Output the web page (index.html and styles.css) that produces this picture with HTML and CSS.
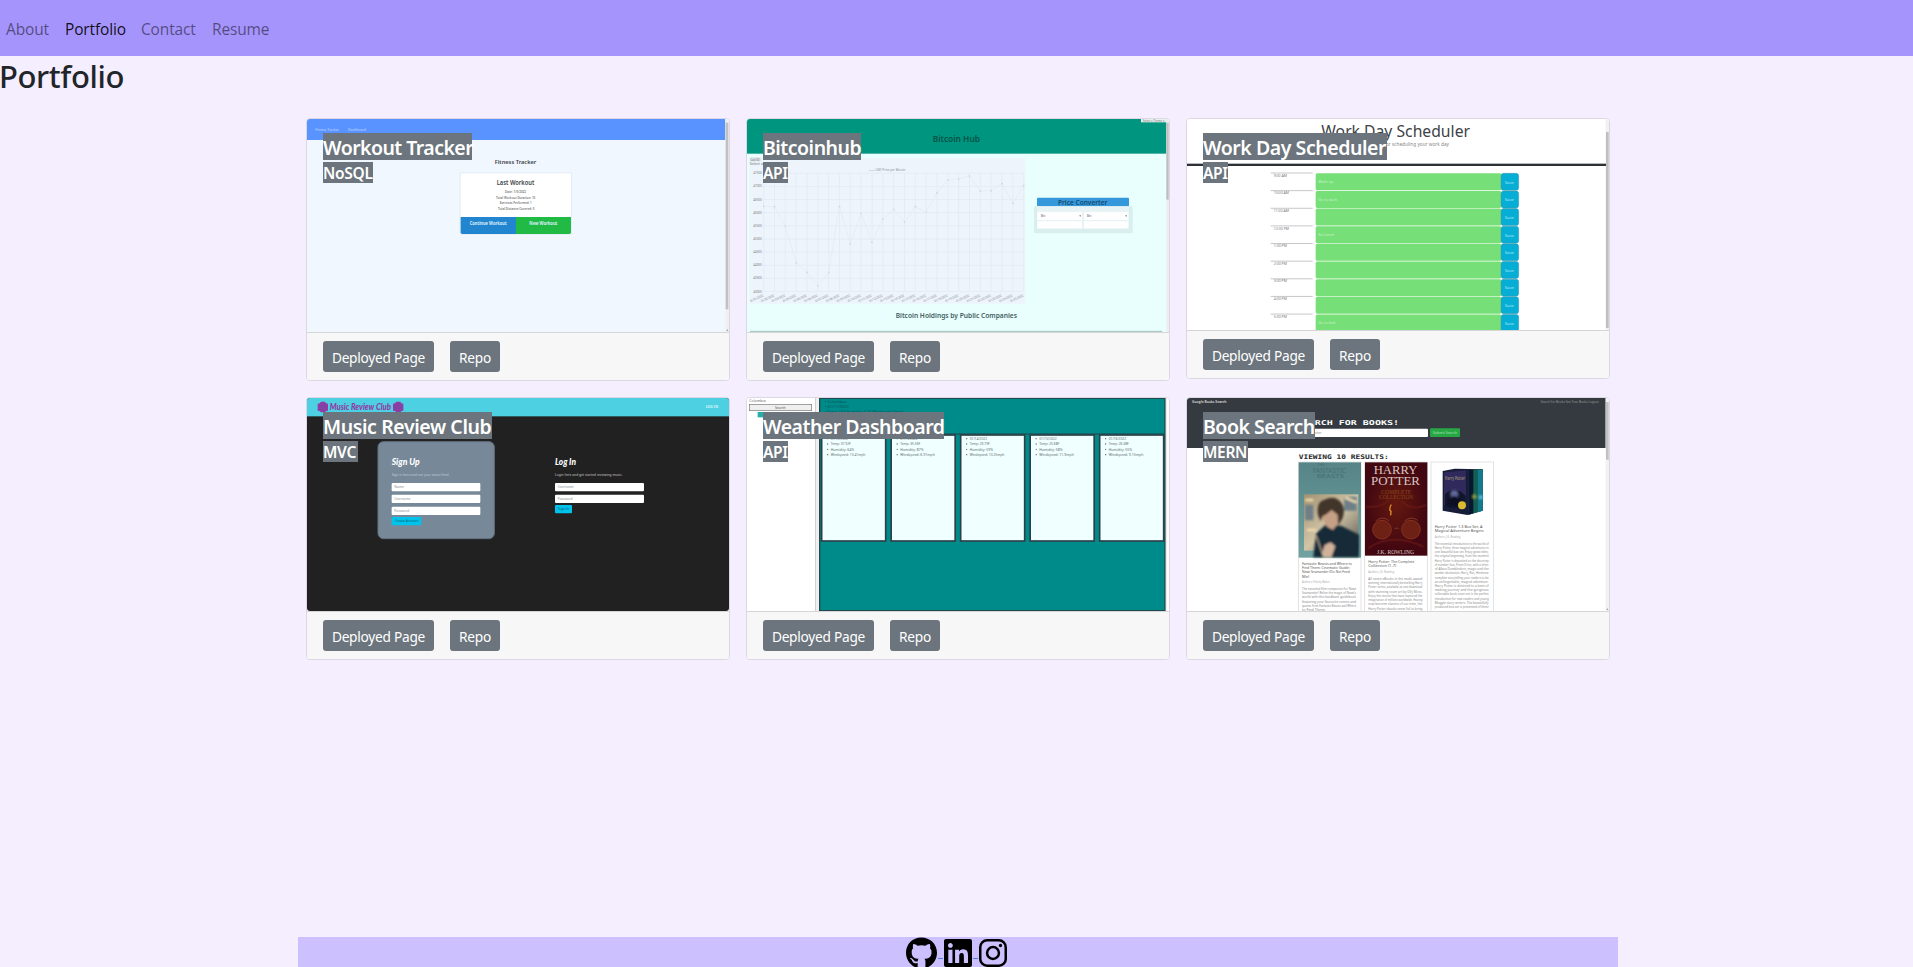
FILE: index.html
```html
<!DOCTYPE html>
<html lang="en">
<head>
<meta charset="utf-8">
<title>Portfolio</title>
<link rel="stylesheet" href="styles.css">
</head>
<body>
<nav class="navbar">
  <a class="nav-link about">About</a>
  <a class="nav-link active">Portfolio</a>
  <a class="nav-link contact">Contact</a>
  <a class="nav-link resume">Resume</a>
</nav>
<main>
  <h1 class="page-title">Portfolio</h1>
  <div class="cards">

    <article class="card">
      <svg class="shot" viewBox="21 27 1266 639" preserveAspectRatio="none">
        <rect x="21" y="27" width="1266" height="639" fill="#f0f7ff"/>
        <rect x="21" y="27" width="1255" height="63" fill="#5893ff"/>
        <rect x="1276" y="27" width="11" height="639" fill="#f0f0f2"/>
        <rect x="1277" y="38" width="8" height="560" fill="#c1c1c3"/>
        <path d="M1279 662l3-4 3 4z" fill="#888"/>
        <g fill="#c5dbff" font-size="13"><text x="46" y="63" textLength="71">Fitness Tracker</text><text x="144" y="63" textLength="54">Dashboard</text></g>
        <rect x="479" y="187" width="337" height="187" rx="6" fill="#e3ebf4"/>
        <rect x="482" y="190" width="331" height="132" rx="4" fill="#fff"/>
        <path d="M482 321h166v51H487q-5 0-5-5z" fill="#2285d0"/>
        <path d="M648 321h165v46q0 5-5 5H648z" fill="#21ba45"/>
        <g font-weight="600" fill="#3c4148">
          <text x="584" y="161" font-size="18" textLength="125">Fitness Tracker</text>
          <text x="590" y="225" font-size="20" textLength="113">Last Workout</text>
        </g>
        <g font-size="11" font-weight="600" fill="#777">
          <text x="615" y="249" textLength="63">Date: 1/3/2022</text>
          <text x="588" y="266" textLength="118">Total Workout Duration: 10</text>
          <text x="599" y="283" textLength="96">Exercises Performed: 1</text>
          <text x="594" y="299" textLength="109">Total Distance Covered: 5</text>
        </g>
        <g font-size="14" font-weight="700" fill="#dceefa"><text x="509" y="345" textLength="111">Continue Workout</text><text x="688" y="345" textLength="84">New Workout</text></g>
      </svg>
      <div class="overlay"><h5 class="title"><span class="t1">Workout Tracker</span></h5><p class="tech"><span class="k1">NoSQL</span></p></div>
      <div class="card-footer"><a class="btn">Deployed Page</a><a class="btn repo">Repo</a></div>
    </article>

    <article class="card">
      <svg class="shot" viewBox="21 27 1266 639" preserveAspectRatio="none">
        <rect x="21" y="27" width="1266" height="639" fill="#e9fffd"/>
        <rect x="21" y="27" width="1258" height="104" fill="#00957f"/>
        <rect x="1279" y="27" width="8" height="639" fill="#eee"/>
        <rect x="1279" y="38" width="7" height="231" fill="#bbbfc0"/>
        <rect x="1203" y="27" width="76" height="10" fill="#e8f2f1"/>
        <text x="1208" y="35" font-size="9" fill="#777" textLength="66">Select a Theme ▾</text>
        <text x="578" y="95" font-size="24" font-weight="600" fill="#075348" textLength="142">Bitcoin Hub</text>
        <rect x="29" y="145" width="827" height="436" fill="#eef4fc"/>
        <rect x="29" y="142" width="33" height="12" fill="#d8e0e5"/>
        <g font-size="10" fill="#777"><text x="32" y="152" textLength="26">Last 30</text><text x="29" y="164" textLength="40">Select a</text></g>
        <g class="chart"></g>
        <text x="388" y="183" font-size="10" fill="#848c96" textLength="108">▭▭ USD Price per Bitcoin</text>
        <rect x="882" y="288" width="296" height="82" rx="5" fill="#d8eeef"/>
        <rect x="891" y="263" width="276" height="26" rx="3" fill="#3498db"/>
        <text x="954" y="284" font-size="20" font-weight="600" fill="#174b70" textLength="148">Price Converter</text>
        <path d="M891 289h276v68H891z" fill="#e7f3f5"/>
        <path d="M892 306h134v24H892zM1032 306h133v24h-133zM892 334h134v21H892zM1032 334h133v21h-133z" fill="#fff"/>
        <g fill="#667"><text x="902" y="322" font-size="10">Btc</text><text x="1040" y="322" font-size="10">Btc</text><path d="M1018 316h5l-2.500 5zM1156 316h5l-2.500 5z"/></g>
        <text x="467" y="624" font-size="20" font-weight="600" fill="#42605f" textLength="364">Bitcoin Holdings by Public Companies</text>
        <path d="M30 664H1266" stroke="#9fbebb" stroke-width="3"/>
      </svg>
      <div class="overlay"><h5 class="title"><span class="t2">Bitcoinhub</span></h5><p class="tech"><span class="k2">API</span></p></div>
      <div class="card-footer"><a class="btn">Deployed Page</a><a class="btn repo">Repo</a></div>
    </article>

    <article class="card">
      <svg class="shot short" viewBox="21 27 1266 633" preserveAspectRatio="none">
        <rect x="21" y="27" width="1266" height="633" fill="#fff"/>
        <rect x="1277" y="27" width="10" height="633" fill="#f1f1f1"/>
        <rect x="1278" y="66" width="8" height="588" fill="#bfbfbf"/>
        <text x="424" y="81" font-size="48" fill="#3e4247" textLength="446">Work Day Scheduler</text>
        <text x="462" y="107" font-size="15" fill="#888" textLength="345">A simple calendar app for scheduling your work day</text>
        <rect x="21" y="161" width="1257" height="7" fill="#2d3035"/>
        <g class="schedule"></g>
      </svg>
      <div class="overlay"><h5 class="title"><span class="t3">Work Day Scheduler</span></h5><p class="tech"><span class="k2">API</span></p></div>
      <div class="card-footer"><a class="btn">Deployed Page</a><a class="btn repo">Repo</a></div>
    </article>

    <article class="card">
      <svg class="shot round" viewBox="21 24 1266 639" preserveAspectRatio="none">
        <rect x="21" y="24" width="1266" height="639" fill="#212121"/>
        <rect x="21" y="24" width="1266" height="55" fill="#4dd0e1"/>
        <g fill="#923aa5"><path d="M53 41l6-1 4-5h12l3 5 6 1v21l-6 1-3 4H63l-4-4-6-1zM279 41l6-1 4-5h12l3 5 6 1v21l-6 1-3 4h-12l-4-4-6-1z"/></g>
        <path d="M61 44v16M69 41v21M77 45v14M287 44v16M295 41v21M303 45v14" stroke="#6f4ca0" stroke-width="3"/>
        <text class="script" x="89" y="59" font-size="26" fill="#923aa5" textLength="184">Music Review Club</text>
        <text x="1217" y="54" font-size="12" font-weight="700" fill="#d8f6fa" textLength="37">LOG IN</text>
        <rect x="234" y="155" width="349" height="291" rx="16" fill="#778899" stroke="#62707e" stroke-width="3"/>
        <g class="script" font-size="26" fill="#fff"><text x="275" y="225" textLength="84">Sign Up</text><text x="765" y="225" textLength="63">Log In</text></g>
        <g font-size="12"><text x="275" y="258" fill="#c4ccd5" textLength="173">Sign in here and see your music feed.</text><text x="765" y="258" fill="#c8c8c8" textLength="202">Login here and get started reviewing music.</text></g>
        <g fill="#fff"><rect x="275" y="279" width="266" height="25" rx="3"/><rect x="275" y="314" width="266" height="25" rx="3"/><rect x="275" y="350" width="266" height="25" rx="3"/><rect x="765" y="279" width="267" height="25" rx="3"/><rect x="765" y="314" width="267" height="25" rx="3"/></g>
        <g fill="#00c3ec"><rect x="275" y="381" width="89" height="25" rx="3"/><rect x="765" y="345" width="51" height="25" rx="3"/></g>
        <g font-size="11" fill="#8a8f94"><text x="283" y="295" textLength="29">Name</text><text x="283" y="331" textLength="48">Username</text><text x="283" y="366" textLength="45">Password</text><text x="773" y="295" textLength="48">Username</text><text x="773" y="331" textLength="45">Password</text></g>
        <g font-size="11" fill="#075a72"><text x="284" y="397" textLength="72">Create Account</text><text x="774" y="361" textLength="33">Sign In</text></g>
      </svg>
      <div class="overlay"><h5 class="title"><span class="t4">Music Review Club</span></h5><p class="tech"><span class="k4">MVC</span></p></div>
      <div class="card-footer"><a class="btn">Deployed Page</a><a class="btn repo">Repo</a></div>
    </article>

    <article class="card">
      <svg class="shot" viewBox="21 24 1266 639" preserveAspectRatio="none">
        <rect x="21" y="24" width="1266" height="639" fill="#fff"/>
        <text x="28" y="35" font-size="11" fill="#666" textLength="50">Columbus</text>
        <rect x="28" y="43" width="187" height="19" fill="#efefef" stroke="#777" stroke-width="2"/>
        <text x="105" y="56" font-size="11" fill="#555" textLength="32">Search</text>
        <rect x="53" y="66" width="60" height="16" fill="#20b2aa"/>
        <path d="M227 24V663" stroke="#aaa" stroke-width="2"/>
        <rect x="228" y="24" width="10" height="639" fill="#f0f0f0"/>
        <rect x="239" y="25" width="1036" height="637" fill="#008b8b" stroke="#23494d" stroke-width="4"/>
        <path d="M1279 24V663" stroke="#ddd" stroke-width="2"/>
        <g font-size="12" fill="#075154"><text x="255" y="38">•  Columbus</text><text x="255" y="53">•  01/11/2022</text><text x="255" y="70" textLength="235">•  Temp: 19.6 Humidity: 51% Windspeed: 5mph</text></g>
        <g class="forecast"></g>
      </svg>
      <div class="overlay"><h5 class="title"><span class="t5">Weather Dashboard</span></h5><p class="tech"><span class="k2">API</span></p></div>
      <div class="card-footer"><a class="btn">Deployed Page</a><a class="btn repo">Repo</a></div>
    </article>

    <article class="card">
      <svg class="shot" viewBox="21 24 1266 639" preserveAspectRatio="none">
        <defs>
          <linearGradient id="teal" x2="0" y2="1"><stop offset="0" stop-color="#568487"/><stop offset="1" stop-color="#70a2a0"/></linearGradient>
          <radialGradient id="red" cx=".5" cy=".45"><stop offset="0" stop-color="#64190f"/><stop offset="1" stop-color="#420711"/></radialGradient>
          <linearGradient id="room" x2="1" y2="1"><stop offset="0" stop-color="#a19170"/><stop offset=".5" stop-color="#d1c5a7"/><stop offset="1" stop-color="#585651"/></linearGradient>
          <filter id="soft"><feGaussianBlur stdDeviation="2.500"/></filter>
        </defs>
        <rect x="21" y="24" width="1266" height="639" fill="#fff"/>
        <rect x="21" y="24" width="1256" height="150" fill="#343a40"/>
        <rect x="1277" y="24" width="10" height="639" fill="#f1f1f1"/>
        <rect x="1278" y="36" width="8" height="173" fill="#c1c1c1"/>
        <path d="M1279 659l3-4 3 4z" fill="#888"/>
        <text x="36" y="40" font-size="11" font-weight="600" fill="#ddd" textLength="103">Google Books Search</text>
        <text x="1082" y="40" font-size="11" fill="#999" textLength="174">Search for Books  See Your Books  Logout</text>
        <text class="mono" x="350" y="104" font-size="20" fill="#fff" textLength="307">SEARCH FOR BOOKS!</text>
        <rect x="354" y="116" width="390" height="25" rx="3" fill="#fff"/>
        <text x="370" y="132" font-size="12" fill="#888" textLength="55">Harry Potter</text>
        <rect x="750" y="115" width="90" height="26" rx="3" fill="#28a745"/>
        <text x="758" y="132" font-size="12" fill="#a5e3b2" textLength="73">Submit Search</text>
        <text class="mono" x="356" y="207" font-size="19" fill="#252525" textLength="270">VIEWING 10 RESULTS:</text>
        <g fill="#fff" stroke="#d6d6d6" stroke-width="2"><rect x="356" y="216" width="187" height="460"/><rect x="554" y="216" width="188" height="460"/><rect x="753" y="216" width="188" height="460"/></g>
        <rect x="356" y="217" width="187" height="286" fill="url(#teal)"/>
        <g fill="#466f73"><text x="412" y="229" font-size="12">THE</text><text x="398" y="248" font-size="20" textLength="100">FANTASTIC</text><text x="410" y="264" font-size="15" textLength="82">BEASTS</text></g>
        <rect x="372" y="313" width="163" height="169" fill="url(#room)"/>
        <g filter="url(#soft)">
          <path d="M375 345h25v46h-25zM492 320h38v42h-38z" fill="#6e7f87"/><path d="M376 330h24M495 323l34 14M380 420h28" stroke="#f1dcaf" stroke-width="7"/>
          <path d="M400 502l8-71 30-28 47 5 52 26v68z" fill="#192c37"/>
          <path d="M424 366q20-22 52-2l-2 36-15 20-18-10-13-22z" fill="#c5a086"/>
          <path d="M414 374q-6-39 19-45 33-16 53 12 11 17 2 43l-14 24-1-34-18-14-18 14-9 4-6 16z" fill="#42342b"/>
          <path d="M426 490l8-25 18-8 14 12-12 33h-24z" fill="#d1b199"/><path d="M409 438l20 58" stroke="#d5bfa0" stroke-width="3"/>
        </g>
        <rect x="555" y="217" width="187" height="280" fill="url(#red)"/>
        <g font-family="Liberation Serif" fill="#d8c7c2"><text x="581" y="252" font-size="36" textLength="131">HARRY</text><text x="573" y="284" font-size="36" textLength="147">POTTER</text><text x="591" y="491" font-size="18" textLength="111">J.K. ROWLING</text></g>
        <g font-family="Liberation Serif" font-size="16" fill="#8a461d"><text x="604" y="312" textLength="90">COMPLETE</text><text x="597" y="328" textLength="103">COLLECTION</text></g>
        <path d="M558 350q45 5 69-20M739 345q-45 20-74-12M565 475q70-50 165-5" stroke="#752019" stroke-width="7" opacity=".45" fill="none"/>
        <path d="M634 344q-6 8-4 17l3 3-1 12" fill="none" stroke="#e58f24" stroke-width="4"/>
        <g fill="#6d2115" stroke="#85301f" stroke-width="3"><circle cx="606" cy="419" r="28"/><circle cx="693" cy="419" r="28"/></g><path d="M587 393q20-17 40-1M674 393q20-17 39-2M644 416q7-4 12 0" stroke="#a04a32" stroke-width="2" fill="none"/>
        <path d="M788 243l36-7 84 2v124l-46 13-74-13z" fill="#171c38"/><path d="M866 240l42-2v124l-42 12z" fill="#126054"/><path d="M866 240h14v130l-14 4z" fill="#0a1530"/><path d="M894 239h14v122l-14 6z" fill="#15798f"/>
        <path d="M792 247l66-6v113l-66-8z" fill="#30295c"/><path d="M795 313q30-30 62 5v37l-62-8z" fill="#12152c"/><text x="795" y="271" font-size="16" font-weight="700" fill="#8c8270" textLength="60">Harry Potter</text>
        <g filter="url(#soft)"><circle cx="823" cy="312" r="12" fill="#5e6799"/><path d="M804 349q5-33 19-32 17 2 20 34z" fill="#080e22"/><circle cx="883" cy="320" r="7" fill="#929b3c"/><circle cx="902" cy="322" r="6" fill="#66c4dd"/></g><circle cx="846" cy="346" r="12" fill="#d9bb30"/>
        <g class="blurbs"></g>
      </svg>
      <div class="overlay"><h5 class="title"><span class="t6">Book Search</span></h5><p class="tech"><span class="k6">MERN</span></p></div>
      <div class="card-footer"><a class="btn">Deployed Page</a><a class="btn repo">Repo</a></div>
    </article>
  </div>
</main>
<footer class="footer">
  <svg width="31" height="32" viewBox="0 0 496 512"><path d="M165.900 397.400c0 2-2.300 3.600-5.200 3.600-3.300.3-5.600-1.300-5.600-3.600 0-2 2.300-3.600 5.200-3.600 3-.3 5.600 1.300 5.600 3.600zm-31.100-4.500c-.7 2 1.300 4.300 4.300 4.900 2.600 1 5.600 0 6.200-2s-1.300-4.300-4.300-5.200c-2.600-.7-5.500.3-6.200 2.300zm44.200-1.700c-2.900.7-4.900 2.600-4.600 4.900.3 2 2.900 3.300 5.900 2.600 2.900-.7 4.900-2.600 4.600-4.600-.3-1.900-3-3.200-5.900-2.900zM244.800 8C106.100 8 0 113.300 0 252c0 110.900 69.800 205.800 169.500 239.200 12.800 2.300 17.300-5.600 17.300-12.100 0-6.200-.3-40.400-.3-61.400 0 0-70 15-84.700-29.800 0 0-11.400-29.100-27.800-36.600 0 0-22.900-15.700 1.600-15.400 0 0 24.900 2 38.600 25.800 21.900 38.600 58.600 27.500 72.900 20.900 2.300-16 8.800-27.100 16-33.700-55.900-6.200-112.300-14.300-112.300-110.500 0-27.500 7.600-41.300 23.600-58.900-2.600-6.500-11.100-33.300 2.600-67.900 20.900-6.500 69 27 69 27 20-5.600 41.500-8.500 62.800-8.500s42.800 2.900 62.800 8.500c0 0 48.100-33.600 69-27 13.700 34.700 5.200 61.400 2.600 67.900 16 17.700 25.800 31.500 25.800 58.900 0 96.500-58.900 104.200-114.800 110.500 9.200 7.900 17 22.900 17 46.400 0 33.700-.3 75.400-.3 83.600 0 6.500 4.600 14.400 17.300 12.100C428.200 457.800 496 362.900 496 252 496 113.300 383.500 8 244.800 8z"/></svg>
  <i class="dash"></i>
  <svg width="28" height="32" viewBox="0 0 448 512"><path d="M416 32H31.900C14.300 32 0 46.500 0 64.300v383.400C0 465.500 14.300 480 31.900 480H416c17.600 0 32-14.500 32-32.300V64.300c0-17.800-14.400-32.300-32-32.300zM135.400 416H69V202.200h66.500V416zm-33.200-243c-21.300 0-38.500-17.300-38.500-38.500S80.900 96 102.200 96c21.200 0 38.500 17.300 38.500 38.500 0 21.300-17.200 38.500-38.500 38.500zm282.100 243h-66.400V312c0-24.800-.5-56.700-34.500-56.700-34.600 0-39.900 27-39.900 54.900V416h-66.400V202.200h63.700v29.200h.9c8.900-16.800 30.600-34.500 62.900-34.500 67.200 0 79.700 44.300 79.700 101.900V416z"/></svg>
  <i class="dash"></i>
  <svg width="28" height="32" viewBox="0 0 448 512" fill="none" stroke="#000" stroke-width="40"><rect x="20" y="52" width="408" height="408" rx="110"/><circle cx="224" cy="256" r="95"/><circle cx="343.700" cy="136.300" r="27" fill="#000" stroke="none"/></svg>
</footer>
<script src="thumbs.js"></script>
</body>
</html>
```

FILE: styles.css
```css
* { box-sizing: border-box; }
html, body { height: 100%; }
body { margin: 0; display: flex; flex-direction: column; overflow: hidden; background: #f4eeff; color: #212529; font-family: "Noto Sans", "Open Sans", sans-serif; font-size: 16px; line-height: 24px; }
main { flex: 1; min-height: 0; }
.navbar { height: 56px; flex: none; display: flex; align-items: center; gap: 16px; padding: 1px 0 0 6px; background: #a594fb; }
.nav-link { font-size: 15.5px; font-family: "Open Sans", sans-serif; letter-spacing: -.15px; color: rgba(0, 0, 0, .5); width: 43px; white-space: nowrap; }
.nav-link.active { color: rgba(0, 0, 0, .9); width: 60px; }
.nav-link.contact { width: 55px; }
.nav-link.resume { width: 56px; }
.page-title { margin: 0 0 16px; height: 38px; font-size: 31px; font-weight: 500; line-height: 41px; letter-spacing: -.4px; text-indent: -1px; }
.cards { width: 1320px; margin-left: 298px; padding: 8px; display: grid; grid-template-columns: repeat(3, 424px); gap: 16px; align-items: start; }
.card { position: relative; border: 1px solid #dcd7e3; border-radius: 4px; background: #fff; }
.shot { display: block; width: 422px; height: 213px; border-radius: 3px 3px 0 0; font-family: "Noto Sans", sans-serif; }
.shot.short { height: 211px; }
.shot.round { border-radius: 3px; }
.shot .script { font-family: "Lato", sans-serif; font-style: italic; font-weight: 900; }
.shot .mono { font-family: "DejaVu Sans Mono", monospace; font-weight: 700; }
.overlay { position: absolute; left: 16px; top: 14px; color: #fff; }
.title { margin: 0; height: 27px; font-size: 19.5px; font-weight: 600; line-height: 29px; }
.tech { margin: 2px 0 0; height: 21px; font-size: 15.5px; font-weight: 600; line-height: 23px; }
.title span, .tech span { display: block; height: 100%; background: #6c757d; white-space: nowrap; }
.title span { letter-spacing: -.5px; }
.tech span { letter-spacing: -.3px; }
.title .t1 { width: 149px; letter-spacing: -.55px; }
.t2 { width: 98px; }
.title .t3 { width: 184px; letter-spacing: -.45px; }
.title .t4 { width: 169px; letter-spacing: -.4px; }
.t5 { width: 181px; }
.t6 { width: 112px; }
.k1 { width: 50px; }
.k2 { width: 25px; }
.k4 { width: 35px; }
.k6 { width: 45px; }
.card-footer { height: 48px; display: flex; gap: 16px; padding: 8px 16px; border-top: 1px solid #d6d6d8; background: #f7f7f7; border-radius: 0 0 3px 3px; }
.btn { width: 111px; height: 31px; border-radius: 3px; background: #6c757d; color: #fff; font-size: 13.7px; line-height: 33px; letter-spacing: -.25px; text-align: center; white-space: nowrap; }
.btn.repo { width: 50px; }
.footer { flex: none; width: 1320px; height: 30px; margin-left: 298px; display: flex; justify-content: center; align-items: flex-start; background: #ccc0ff; overflow: hidden; }
.footer svg { flex: none; }
.footer svg:first-child { margin-left: -4px; }
.dash { width: 5px; height: 1px; margin: 21px 1px 0; background: #4a80f0; }
```

FILE: thumbs.js
```js
const put = (cls, html) => { document.querySelector('.' + cls).innerHTML = html; };

// Bitcoin price chart
const prices = [289, 290, 349, 459, 487, 528, 487, 290, 401, 310, 397, 328, 298, 337, 290, 307, 248, 210, 207, 198, 243, 242, 221, 280, 227];
let chart = '';
prices.forEach((y, i) => {
  const x = 71 + i * 32.5;
  chart += `<path d="M${x} 190V545" stroke="#e3e9f1" stroke-width="2"/>`;
  chart += `<circle cx="${x}" cy="${y}" r="2.500" fill="#c6d0d9"/>`;
  chart += `<text x="${x - 39}" y="577" font-size="10" fill="#858b92" textLength="43" transform="rotate(-25 ${x - 39} 577)">01/${String(i + 1).padStart(2, '0')}/2022</text>`;
});
for (let i = 0; i < 10; i++) {
  const y = 190 + i * 39.4;
  chart += `<path d="M66 ${y}H851" stroke="#e3e9f1" stroke-width="2"/><text x="40" y="${y + 3}" font-size="9" fill="#777" textLength="25">${47500 - i * 500}</text>`;
}
chart += `<polyline fill="none" stroke="#dfe6ed" stroke-width="1.500" points="${prices.map((y, i) => `${71 + i * 32.5},${y}`).join(' ')}"/>`;
put('chart', chart);

// Work day rows
const hours = ['9:00 AM', '10:00 AM', '11:00 AM', '12:00 PM', '1:00 PM', '2:00 PM', '3:00 PM', '4:00 PM', '5:00 PM'];
const tasks = { 0: 'Wake up', 1: 'Go to work', 3: 'Eat lunch', 8: 'Go to bed' };
put('schedule', hours.map((h, i) => {
  const y = 190 + i * 52.9;
  return `<path d="M272 ${y - 1}H398" stroke="#aaa" stroke-width="2"/><text x="281" y="${y + 10}" font-size="12" fill="#777" textLength="${h.length > 7 ? 46 : 40}">${h}</text>
  <rect x="407" y="${y}" width="557" height="51" rx="5" fill="#77df77"/>
  <rect x="963" y="${y}" width="53" height="51" rx="8" fill="#06aed5" stroke="#4b93a5" stroke-width="1.500"/>
  <text x="974" y="${y + 31}" font-size="13" fill="#a9e6f3" textLength="28">Save</text>
  <text x="415" y="${y + 30}" font-size="11" fill="#c8f3c8">${tasks[i] || ''}</text>`;
}).join(''));

// Five day forecast
const days = [['01/12/2022', '37.92F', '64%', '13.41mph'], ['01/13/2022', '35.56F', '87%', '6.91mph'], ['01/14/2022', '29.79F', '59%', '10.25mph'], ['01/15/2022', '25.68F', '58%', '11.9mph'], ['01/16/2022', '26.38F', '55%', '9.15mph']];
put('forecast', '<path d="M242 132H1273" stroke="#263f47" stroke-width="3"/>' + days.map((d, i) => {
  const x = 245 + i * 208.5;
  return `<rect x="${x}" y="135" width="192" height="318" fill="#f0ffff" stroke="#2a4148" stroke-width="5"/>` +
    [d[0], 'Temp: ' + d[1], 'Humidity: ' + d[2], 'Windspeed: ' + d[3]].map((t, j) => `<circle cx="${x + 18}" cy="${146 + j * 16}" r="2" fill="#5c6768"/><text x="${x + 27}" y="${150 + j * 16}" font-size="12" fill="#626d6e" textLength="${[52, 60, 70, 104][j]}">${t}</text>`).join('');
}).join(''));

// Book descriptions
const blurb = (x, y, size, fill, step, lines) => lines.map((t, i) => `<text x="${x}" y="${y + i * step}" font-size="${size}" fill="${fill}"${t.length > 24 ? ` textLength="${size > 11 ? Math.min(150, t.length * 5.3) : 162}"` : ''}>${t}</text>`).join('');
put('blurbs',
  blurb(366, 524, 12, '#555', 13, ['Fantastic Beasts and Where to', 'Find Them: Cinematic Guide:', 'Newt Scamander (Do Not Feed', 'Me)']) +
  blurb(366, 578, 8, '#aaa', 10, ['Authors: Felicity Baker']) +
  blurb(366, 600, 11, '#888', 12.5, ['The essential film companion for Newt', 'Scamander! Relive the magic of Newt’s', 'world with this hardback guidebook', 'featuring your favourite scenes and', 'quotes from Fantastic Beasts and Where', 'to Find Them.']) +
  blurb(565, 519, 12, '#555', 13, ['Harry Potter: The Complete', 'Collection (1-7)']) +
  blurb(565, 549, 8, '#aaa', 10, ['Authors: J.K. Rowling']) +
  blurb(565, 570, 11, '#888', 12.7, ['All seven eBooks in the multi-award', 'winning, internationally bestselling Harry', 'Potter series, available as one download', 'with stunning cover art by Olly Moss.', 'Enjoy the stories that have captured the', 'imagination of millions worldwide. Having', 'now become classics of our time, the', 'Harry Potter ebooks never fail to bring']) +
  blurb(764, 413, 12, '#555', 13, ['Harry Potter 1-3 Box Set: A', 'Magical Adventure Begins']) +
  blurb(764, 443, 8, '#aaa', 10, ['Authors: J.K. Rowling']) +
  blurb(764, 464, 11, '#888', 12.7, ['The essential introduction to the world of', 'Harry Potter, three magical adventures in', 'one beautiful box set. Enjoy great titles,', 'the original beginning, from the moment', 'Harry Potter is deposited on the doorstep', 'of number four, Privet Drive, with a letter', 'of Albus Dumbledore, magic and the', 'wonder destination. Harry, Ron, Hermione', 'complete storytelling your readers to be', 'an unforgettable, magical adventure.', 'Harry Potter is destined to a keen of', 'making journey and the gorgeous', 'collectable book cover set is the perfect', 'introduction for new readers and young', 'Muggle story writers. The beautifully', 'produced box set is presented of three']));

// Fitted labels scale their glyphs rather than their spacing
document.querySelectorAll('.shot text[textLength]').forEach(t => t.setAttribute('lengthAdjust', 'spacingAndGlyphs'));
```
